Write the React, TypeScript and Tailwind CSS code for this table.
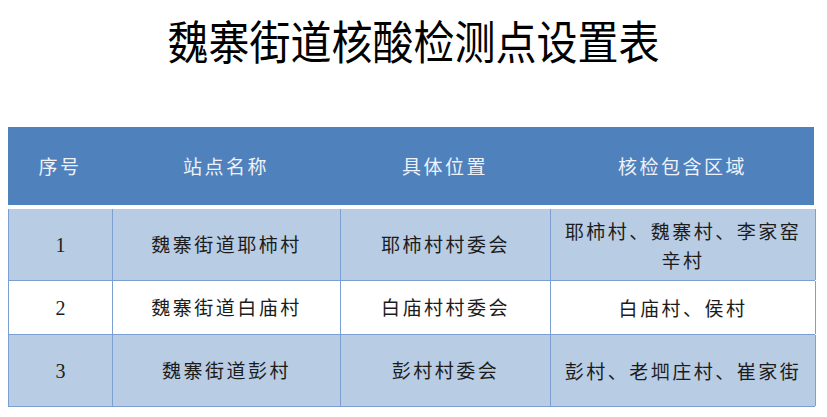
const ROWS = [
  { no: '1', name: '魏寨街道耶柿村', place: '耶柿村村委会', area: ['耶柿村、魏寨村、李家窑', '辛村'], h: 'h-[72px]', bg: 'bg-[#b8cce4]' },
  { no: '2', name: '魏寨街道白庙村', place: '白庙村村委会', area: ['白庙村、侯村'], h: 'h-[54px]', bg: 'bg-white' },
  { no: '3', name: '魏寨街道彭村', place: '彭村村委会', area: ['彭村、老垇庄村、崔家街'], h: 'h-[72px]', bg: 'bg-[#b8cce4]' },
];

const COLS = 'grid grid-cols-[104px_228px_210px_265px]';
const CJK = "font-['Noto_Sans_CJK_SC',sans-serif]";

export default function App() {
  return (
    <div className="w-[827px] h-[417px] bg-white overflow-hidden">
      {/* title */}
      <div className="h-[127px] pt-[23px] flex justify-center">
        <h1 className={`${CJK} text-[41px] leading-none font-normal text-black scale-y-[1.12]`}>
          魏寨街道核酸检测点设置表
        </h1>
      </div>

      <div className="ml-[8px] w-[807px]">
        {/* header */}
        <div className={`${COLS} h-[78px] w-[806px] bg-[#4f81bd] text-[#eef2f8] ${CJK} text-[19px] tracking-[2.5px]`}>
          {['序号', '站点名称', '具体位置', '核检包含区域'].map((t) => (
            <div key={t} className="flex items-center justify-center">{t}</div>
          ))}
        </div>
        <div className="h-[4px]" />

        {/* body */}
        <div className="border-l border-[#7b9fd3]">
          {ROWS.map((r) => (
            <div key={r.no} className={`${COLS} ${r.h} ${r.bg} border-b border-[#7b9fd3] text-[#1c1c1c] text-[19px]`}>
              <div className="flex items-center justify-center border-r border-[#7b9fd3] font-['Liberation_Serif',serif] text-[20px]">
                {r.no}
              </div>
              <div className={`flex items-center justify-center border-r border-[#7b9fd3] ${CJK} tracking-[2.5px]`}>
                {r.name}
              </div>
              <div className={`flex items-center justify-center border-r border-[#7b9fd3] ${CJK} tracking-[2.5px]`}>
                {r.place}
              </div>
              <div className={`flex flex-col items-center justify-center border-r border-[#7b9fd3] ${CJK} tracking-[2.5px] leading-[29px]`}>
                {r.area.map((a) => (
                  <span key={a}>{a}</span>
                ))}
              </div>
            </div>
          ))}
        </div>
      </div>
    </div>
  );
}
